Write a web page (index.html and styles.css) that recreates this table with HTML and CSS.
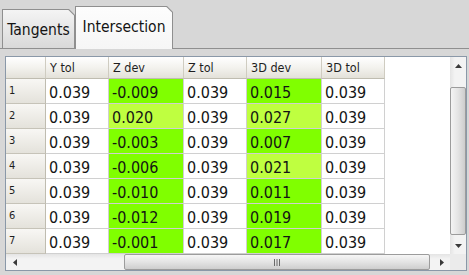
FILE: index.html
```html
<!DOCTYPE html>
<html>
<head>
<meta charset="utf-8">
<link rel="stylesheet" href="styles.css">
</head>
<body>
<div class="tabbar">
  <div class="tab tab-tangents"><div class="tab-face">Tangents</div></div>
  <div class="tab tab-active"><div class="tab-face">Intersection</div></div>
</div>
<div class="pane">
  <div class="widget">
    <div class="viewport">
      <div class="grid">
        <div class="hcell"></div><div class="hcell">Y tol</div><div class="hcell">Z dev</div><div class="hcell">Z tol</div><div class="hcell">3D dev</div><div class="hcell">3D tol</div>

        <div class="rcell">1</div><div class="dcell">0.039</div><div class="dcell g1">-0.009</div><div class="dcell">0.039</div><div class="dcell g1">0.015</div><div class="dcell">0.039</div>
        <div class="rcell">2</div><div class="dcell">0.039</div><div class="dcell g2">0.020</div><div class="dcell">0.039</div><div class="dcell g2">0.027</div><div class="dcell">0.039</div>
        <div class="rcell">3</div><div class="dcell">0.039</div><div class="dcell g1">-0.003</div><div class="dcell">0.039</div><div class="dcell g1">0.007</div><div class="dcell">0.039</div>
        <div class="rcell">4</div><div class="dcell">0.039</div><div class="dcell g1">-0.006</div><div class="dcell">0.039</div><div class="dcell g2">0.021</div><div class="dcell">0.039</div>
        <div class="rcell">5</div><div class="dcell">0.039</div><div class="dcell g1">-0.010</div><div class="dcell">0.039</div><div class="dcell g1">0.011</div><div class="dcell">0.039</div>
        <div class="rcell">6</div><div class="dcell">0.039</div><div class="dcell g1">-0.012</div><div class="dcell">0.039</div><div class="dcell g1">0.019</div><div class="dcell">0.039</div>
        <div class="rcell">7</div><div class="dcell">0.039</div><div class="dcell g1">-0.001</div><div class="dcell">0.039</div><div class="dcell g1">0.017</div><div class="dcell">0.039</div>
      </div>
    </div>
    <div class="vscroll">
      <div class="sb-btn vbtn"><svg width="7" height="4" viewBox="0 0 7 4"><polygon points="0,4 3.5,0 7,4" fill="#3a3a3a"/></svg></div>
      <div class="vgap-top"></div>
      <div class="vthumb"></div>
      <div class="vgap-bot"></div>
      <div class="sb-btn vbtn"><svg width="7" height="4" viewBox="0 0 7 4"><polygon points="0,0 7,0 3.5,4" fill="#3a3a3a"/></svg></div>
    </div>
    <div class="hscroll">
      <div class="sb-btn hbtn"><svg width="4" height="7" viewBox="0 0 4 7"><polygon points="4,0 4,7 0,3.5" fill="#3a3a3a"/></svg></div>
      <div class="hgap-left"></div>
      <div class="hthumb"><svg width="8" height="7" viewBox="0 0 8 7"><path d="M1.5 0V7M4 0V7M6.5 0V7" stroke="#6a6a6a" stroke-width="1"/></svg></div>
      <div class="hgap-right"></div>
      <div class="sb-btn hbtn"><svg width="4" height="7" viewBox="0 0 4 7"><polygon points="0,0 4,3.5 0,7" fill="#3a3a3a"/></svg></div>
    </div>
    <div class="corner"></div>
  </div>
</div>
</body>
</html>
```
FILE: styles.css
```css
* { box-sizing: border-box; }
html, body { margin: 0; padding: 0; }
body {
  width: 469px;
  height: 275px;
  overflow: hidden;
  background: #d7d7d7;
  font-family: "DejaVu Sans Condensed", "DejaVu Sans", sans-serif;
  color: #141414;
}

.tabbar {
  display: flex;
  align-items: flex-end;
  height: 48px;
  padding-left: 2px;
}
.tab {
  position: relative;
  background: #8f8f8f;
  padding: 1px 1px 0 1px;
  clip-path: polygon(0 0, calc(100% - 6px) 0, 100% 6px, 100% 100%, 0 100%);
}
.tab-face {
  height: 100%;
  text-align: center;
  font-size: 15.5px;
  line-height: 18px;
  padding-top: 11px;
  white-space: nowrap;
  clip-path: polygon(0 0, calc(100% - 5.6px) 0, 100% 5.6px, 100% 100%, 0 100%);
}
.tab-tangents { width: 73px; height: 39px; }
.tab-tangents .tab-face { background: linear-gradient(#f4f4f4, #d9d9d9); }
.tab-active { width: 98px; height: 43px; margin-bottom: -1px; z-index: 1; }
.tab-active .tab-face { background: linear-gradient(#fdfdfd, #f6f6f6); }

.pane {
  border-top: 1px solid #8f8f8f;
  padding: 7px 0 0 5px;
  height: 227px;
}

.widget {
  width: 462px;
  height: 215px;
  border: 1px solid #8a98a8;
  background: #fff;
  display: grid;
  grid-template-columns: 444px 16px;
  grid-template-rows: 197px 16px;
}

.viewport { overflow: hidden; background: #fff; }
.grid {
  display: grid;
  grid-template-columns: 40px 63px 75px 63px 75px 63px;
  grid-template-rows: 22px;
  grid-auto-rows: 25px;
  width: 379px;
}
.hcell {
  background: linear-gradient(#ffffff, #f3f2ee 50%, #e3e1d9);
  border-right: 1px solid #cfccc1;
  border-bottom: 1px solid #bfbcb0;
  font-size: 12.5px;
  line-height: 14px;
  padding: 4px 0 0 4px;
  color: #1e1e1e;
  white-space: nowrap;
}
.rcell {
  background: linear-gradient(#f8f7f4, #e4e2db);
  border-right: 1px solid #bfbcb0;
  border-bottom: 1px solid #c6c3b8;
  font-size: 11px;
  line-height: 13px;
  padding: 5px 0 0 3px;
  color: #1e1e1e;
}
.dcell {
  border-right: 1px solid #d0d0d0;
  border-bottom: 1px solid #d0d0d0;
  font-size: 16px;
  line-height: 20px;
  padding: 4px 0 0 3px;
  white-space: nowrap;
}
.g1 { background: #80ff00; }
.g2 { background: #bfff40; }

.vscroll {
  display: flex;
  flex-direction: column;
  background: linear-gradient(to right, #e4e4e4, #f3f3f3 30%, #f3f3f3);
}
.sb-btn {
  display: flex;
  align-items: center;
  justify-content: center;
  flex: none;
}
.vbtn { height: 17px; }
.vgap-top { height: 13px; flex: none; }
.vgap-bot { height: 2px; flex: none; }
.vthumb {
  height: 148px;
  flex: none;
  border: 1px solid #9c9c9c;
  border-radius: 2px;
  background: linear-gradient(to right, #f4f4f4, #e4e4e4 50%, #cdcdcd);
}

.hscroll {
  display: flex;
  background: linear-gradient(#e4e4e4, #f3f3f3 30%, #f3f3f3);
}
.hbtn { width: 17px; }
.hgap-left { width: 101px; flex: none; }
.hgap-right { width: 3px; flex: none; }
.hthumb {
  width: 306px;
  flex: none;
  border: 1px solid #9c9c9c;
  border-radius: 2px;
  background: linear-gradient(#f6f6f6, #e4e4e4 50%, #cecece);
  display: flex;
  align-items: center;
  justify-content: center;
}
.corner { background: #ebebeb; }
```
